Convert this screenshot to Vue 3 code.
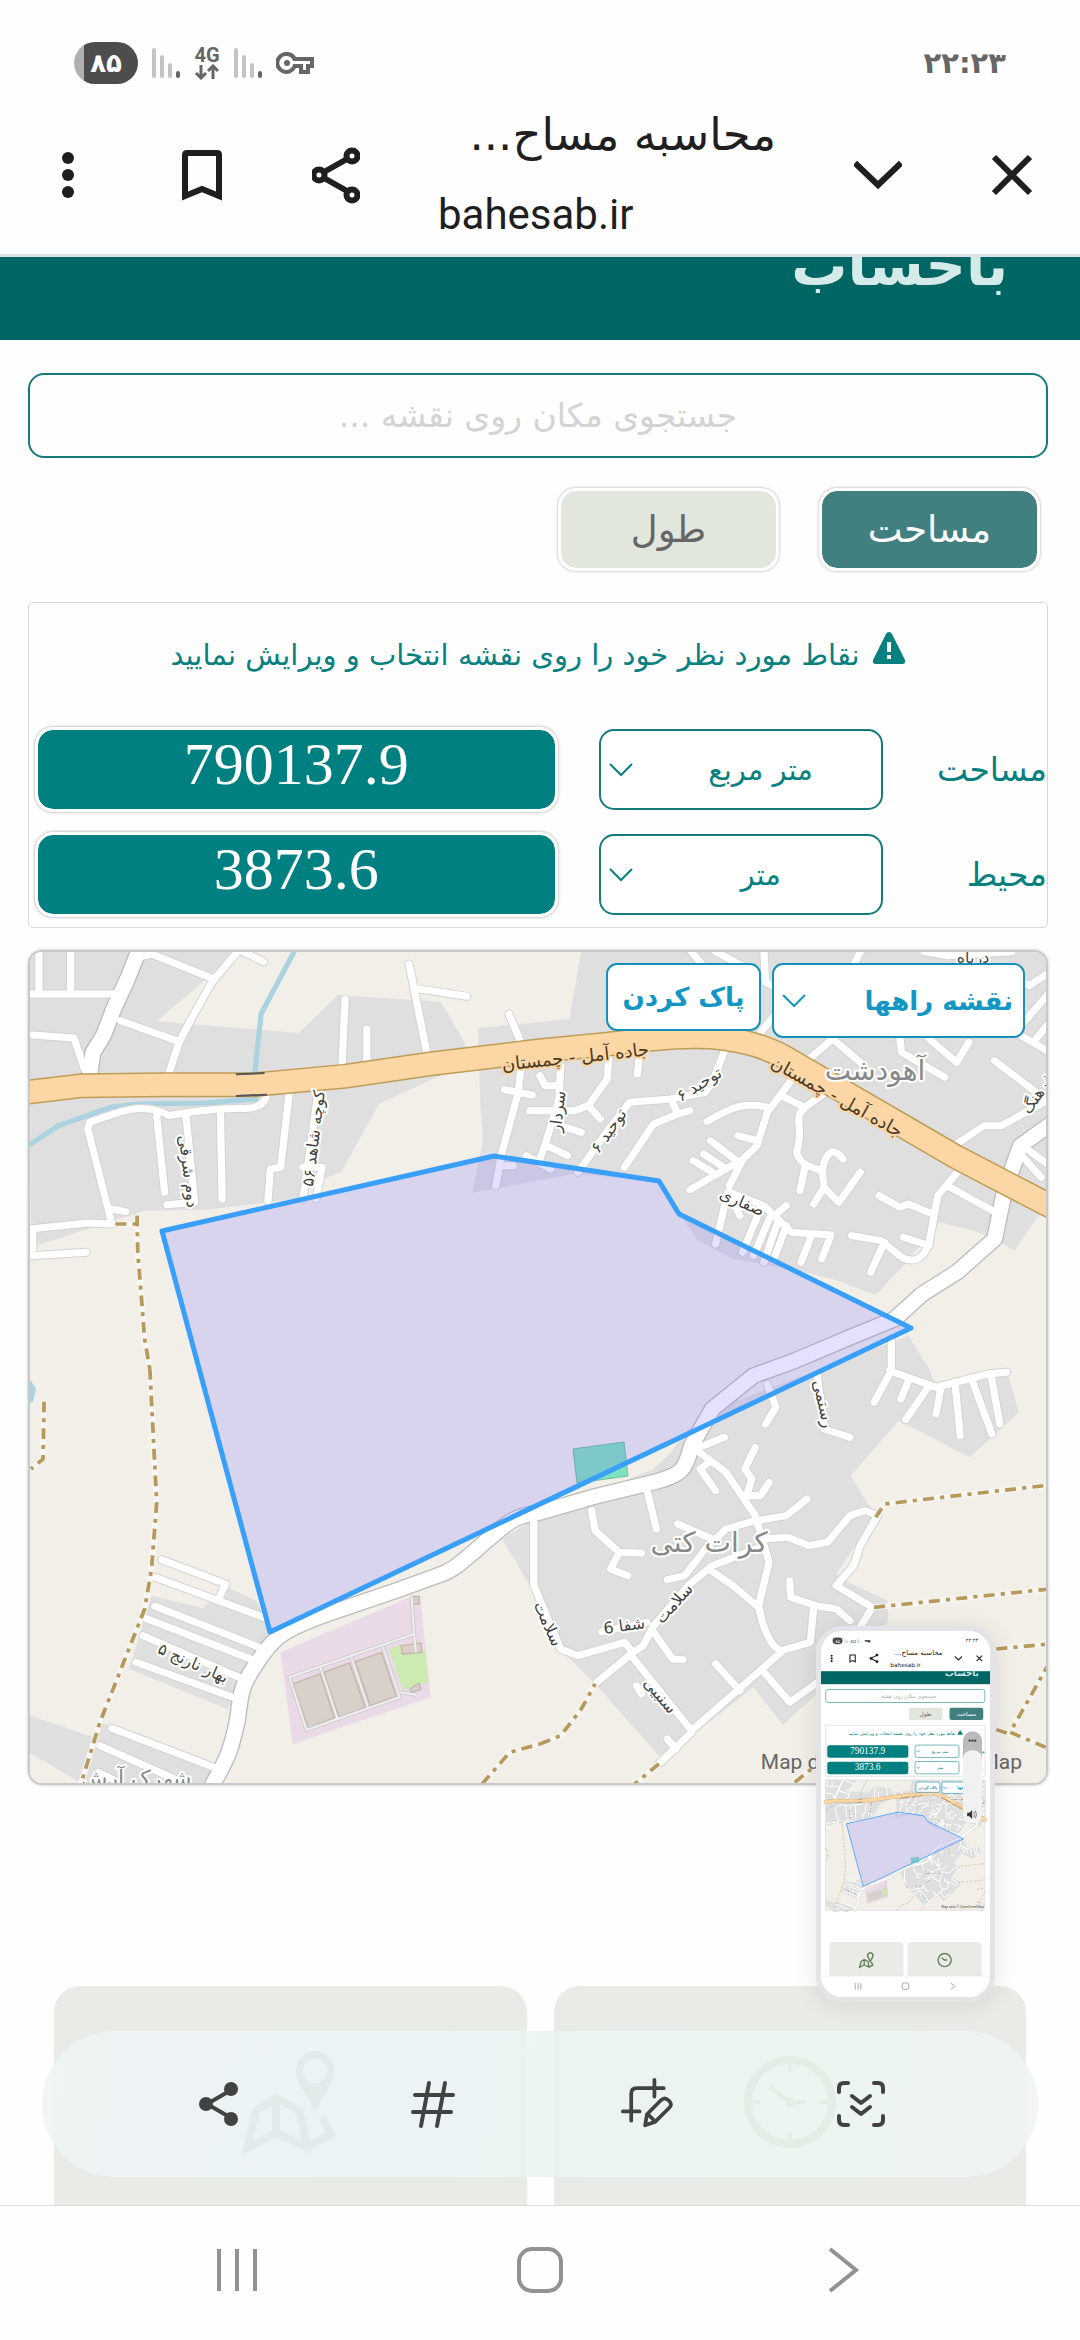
<script setup>
import { ref } from 'vue'

const search = ref('')
const mode = ref('area')
const areaUnit = ref('متر مربع')
const lengthUnit = ref('متر')
const mapType = ref('نقشه راهها')

const area = '790137.9'
const perimeter = '3873.6'

// The map is drawn in four tiles, each with its own local grid
const tiles = [
  {
    id: 'nw',
    at: 'translate(0 940) scale(.3444 .3333)',
    built: 'M85 38H690L455 247L868 282L980 168L1280 188L1360 330L1300 400L1100 495L990 700L940 720L860 780L600 812L420 815L330 845L90 925Z',
    wide: 'M405 30L370 120L330 210L300 290L270 340L260 410',
    streets: 'M85 165H330M113 30V160M205 30V165M400 55L440 45L615 118M690 38L615 130L550 250L520 310L488 410M350 245L520 308M95 288L215 297L245 390M705 38L765 68M1188 75L1240 345M1205 148L1355 172M1002 180L993 380M1065 270V370M1478 225L1512 310M1512 390L1505 460L1455 650L1440 740M1465 452L1545 468M775 465C770 500 740 510 700 508C600 510 540 520 490 530C450 505 400 500 330 525L260 550L255 570L325 855L255 852L85 870M325 810L365 818M95 870V950L250 940M455 530L478 760M540 530L565 790L485 797M640 520L645 780M840 460L815 685L785 690L778 785M925 450L880 780M880 685H935L918 780M1450 680H1490',
    water: 'M858 30L758 225L740 400L742 480L600 492L400 495L320 505L170 560L75 625',
    tracks: 'M335 855H398M398 830L400 940L420 1200L440 1320'
  },
  {
    id: 'ne',
    at: 'translate(540 940) scale(.3444 .3333)',
    built: 'M-180 268L85 240L120 38H1480V800L1440 840L1378 935L1330 905L1260 875L1160 850L1060 975L975 1068L850 1020L720 990L560 960L460 905L405 825L345 725L100 705L-196 762L-165 600L-173 500Z',
    wide: '',
    streets: 'M440 38L480 90M510 38L640 110M650 30L655 130L690 150M720 180L625 300M930 38L910 80M1115 38L1180 50L1370 38M1480 100L1420 140L1380 120M1480 160L1380 280L1480 340M1440 300L1480 250M1045 300L1050 340L1175 415M1130 300L1210 370L1245 310M770 370L850 300L930 370M1320 365L1440 460M740 410L660 520L630 620L590 660L550 740M485 548C560 500 600 490 660 505M700 470L770 505L830 460M770 505C730 540 770 560 745 640C760 690 800 680 820 700L825 745L868 790L930 700M770 680L755 755M825 745L795 795M820 690C830 640 850 620 880 660M575 590L630 605M495 605L565 660M475 645L540 690M445 665L500 700M435 752L590 660M545 760L510 915M580 830L550 760L650 800L730 880L845 888L818 960M640 810L588 940M670 830L620 950M690 850L650 970M715 860L680 960M790 885L758 970M680 830L715 800M1220 690L1155 770L1130 910C1110 970 1080 970 1050 955L990 905L905 890M1000 910L960 1000M985 770L1045 805L1070 795L1140 825M1055 895L1130 920M1190 745L1340 830M1210 615L1290 560L1340 560L1480 480M1390 640L1455 715M1400 620L1480 680M540 325L500 430L480 460L380 480L260 490L200 570L110 700M380 480L400 525L330 555L245 685M400 525L435 515M290 340L283 405M200 350L195 420L140 500L175 540M60 380L55 480L20 600L0 660M-30 515H100L140 500M0 410L15 440H50M60 560L120 580M20 620L80 650M-40 650L30 690',
    water: '',
    tracks: ''
  },
  {
    id: 'sw',
    at: 'translate(0 1370) scale(.3444 .3333)',
    built: 'M440 680L590 718L650 650L745 695L790 800L660 1020L375 900ZM85 1038L270 1105L290 1060L640 1190L600 1245H240L85 1150Z',
    wide: '',
    streets: 'M470 572L655 645L635 690M450 625L765 745M450 712L765 840M415 745L740 875M415 800L705 930M395 880L690 990M325 1078L620 1195M290 1130L540 1245M285 1210L345 1240',
    water: '',
    tracks: 'M435 0L450 300L455 400L440 600L420 720L340 930L290 1060L235 1245M128 98L125 270L90 300M1400 1245L1480 1150L1568 1125'
  },
  {
    id: 'se',
    at: 'translate(540 1370) scale(.3444 .3333)',
    built: 'M1070 -100L1130 0L1145 40L1355 0L1390 130L1248 265L1042 155L902 320L955 410L975 440L860 615L895 640L1010 695V760L820 960L705 1068L620 955L440 1100L345 1160L165 950L50 830L0 700L-110 510L0 440L330 300L380 250L430 180L560 100Z',
    wide: 'M1490 -740L1395 -670L1350 -540L1320 -390L1210 -290L1110 -225L1030 -150L900 -95L740 -25L620 20L500 120L440 230C420 310 410 315 330 340L150 385L0 430C-68 440 -88 455 -138 500C-218 570 -248 605 -298 620L-418 665L-618 735C-738 780 -768 800 -808 860C-868 950 -868 960 -878 1050C-898 1150 -908 1170 -958 1260',
    streets: 'M660 45L685 115L655 165M805 20L825 180L900 205M1020 -90V5L970 100M1015 5L1150 55L1300 15L1355 10M1070 35L1048 90M1130 50L1062 152M1165 50L1150 135M1205 40L1220 200M1255 35L1312 195M1310 20L1335 165M450 240L535 205M450 240L540 310L625 440L665 580L635 710C650 800 680 840 700 845L785 820L795 710M485 285L465 300L510 365M625 235L595 300L615 330L600 380L640 380L665 340M630 455L715 440L775 390M400 465L500 510M625 455L540 480L480 540L420 620L370 632M650 510L720 505L780 530L835 520L900 440L945 425L980 440L930 530L910 590L860 650L965 715L920 790M725 635L728 685L800 710L860 720L900 755M150 425L160 485L230 550L295 552M230 550L205 600L255 620M312 370L338 480M650 530L500 590L430 650L330 770L300 830L270 850M-18 450V650L60 840L110 860L245 820L270 850M490 600L560 650L635 715M330 790L385 870L415 872M180 788L310 760M270 850L165 940M265 860L440 1085L705 845M345 1185L440 1090M510 885L580 965M650 910L725 1000L820 930M280 950L295 975M370 1110L395 1140',
    water: '',
    tracks: 'M0 1125L60 1100L120 1020L160 945M975 445L1000 405L1480 348M970 715L1480 660M1325 840L1480 825M1480 880L1365 1090L1480 1140M1325 1082L1365 1095M345 1185L275 1245M740 1240L800 1190'
  }
]

const highway = 'M60 462L240 440L480 437L740 437L1000 412L1250 375L1568 335L1768 315C1960 290 2040 290 2100 298C2180 310 2220 325 2270 350L2778 655L3070 812'
const plot = '162,1232 494,1157 659,1182 679,1215 911,1329 270,1633'

const mapLabels = [
  { text: 'جاده آمل - چمستان', x: 576, y: 1064, turn: -6, kind: 'road' },
  { text: 'جاده آمل - چمستان', x: 834, y: 1103, turn: 29, kind: 'road' },
  { text: 'آهودشت', x: 875, y: 1081, turn: 0, kind: 'place' },
  { text: 'کرات کتی', x: 709, y: 1553, turn: 0, kind: 'place' },
  { text: 'شهرک آرش', x: 136, y: 1787, turn: 0, kind: 'place small' },
  { text: 'کوچه شاهد ۵۶', x: 319, y: 1140, turn: -83, kind: 'street' },
  { text: 'دوم شرقی', x: 183, y: 1173, turn: 83, kind: 'street' },
  { text: 'سردار', x: 563, y: 1113, turn: -83, kind: 'street' },
  { text: 'توحید ۶', x: 702, y: 1090, turn: -32, kind: 'street' },
  { text: 'توحید ۶', x: 613, y: 1135, turn: -55, kind: 'street' },
  { text: 'صفاری', x: 740, y: 1208, turn: 24, kind: 'street' },
  { text: 'رستمی', x: 818, y: 1406, turn: 78, kind: 'street' },
  { text: 'سلامت', x: 678, y: 1608, turn: -48, kind: 'street' },
  { text: 'شفا 6', x: 625, y: 1632, turn: -8, kind: 'street' },
  { text: 'سلامت', x: 543, y: 1627, turn: 66, kind: 'street' },
  { text: 'سنبیی', x: 656, y: 1700, turn: 50, kind: 'street' },
  { text: 'بهار نارنج ۵', x: 191, y: 1669, turn: 24, kind: 'street' },
  { text: 'فرهنگ', x: 1042, y: 1098, turn: -55, kind: 'street' },
  { text: 'درباه', x: 973, y: 964, turn: 0, kind: 'street' }
]
</script>

<template>
  <div class="screen">
    <div class="status">
      <div class="status-icons">
        <span class="battery">۸۵</span>
        <svg v-for="n in 2" :key="n" class="signal" :class="'sim' + n" viewBox="0 0 28 30">
          <path class="off" d="M2 2V28M10 9V28M18 17V28" />
          <path class="on" d="M26 25V28" />
        </svg>
        <span class="net">
          4G
          <svg viewBox="0 0 26 16"><path d="M7 1V14M2 9L7 14L12 9M19 15V2M14 7L19 2L24 7" /></svg>
        </span>
        <svg class="key" viewBox="0 0 38 22">
          <path fill-rule="evenodd" d="M11 0A11 11 0 0 1 20 5H38V16H34V22H23V16H20A11 11 0 1 1 11 0ZM11 4A7 7 0 1 0 17 13V12H27V18H30V12H34V9H17A7 7 0 0 0 11 4Z" />
          <circle cx="11" cy="11" r="3" />
        </svg>
      </div>
      <time>۲۲:۲۳</time>
    </div>

    <div class="toolbar">
      <button aria-label="Menu">
        <svg viewBox="0 0 48 60"><circle cx="24" cy="13" r="6" /><circle cx="24" cy="30" r="6" /><circle cx="24" cy="47" r="6" /></svg>
      </button>
      <button aria-label="Bookmark">
        <svg class="line" viewBox="0 0 48 60"><path d="M7 51V10Q7 8 9 8H39Q41 8 41 10V51L24 44Z" /></svg>
      </button>
      <button aria-label="Share">
        <svg class="line" viewBox="0 0 48 60"><path d="M12 27L35 14M12 33L35 46" /><circle cx="7" cy="30" r="5.500" /><circle cx="40" cy="11" r="5.500" /><circle cx="40" cy="50" r="5.500" /></svg>
      </button>
      <div class="titles">
        <p class="title" dir="rtl">محاسبه مساح...</p>
        <p class="url">bahesab.ir</p>
      </div>
      <button aria-label="Collapse">
        <svg class="line" viewBox="0 0 48 60"><path d="M1 18L24 40L47 18" /></svg>
      </button>
      <button aria-label="Close">
        <svg class="line" viewBox="0 0 48 60"><path d="M6 12L42 48M42 12L6 48" /></svg>
      </button>
    </div>

    <main class="page" dir="rtl">
      <header class="brand"><a href="#">باحساب</a></header>

      <div class="content">
        <input v-model="search" class="search" type="text" placeholder="جستجوی مکان روی نقشه ..." aria-label="جستجوی مکان روی نقشه" />

        <div class="modes">
          <button class="active" @click="mode = 'area'">مساحت</button>
          <button @click="mode = 'length'">طول</button>
        </div>

        <section class="panel">
          <p class="notice">
            <svg viewBox="0 0 34 32"><path fill-rule="evenodd" d="M17 0Q19 0 20 2L33 28Q34 32 30 32H4Q0 32 1 28L14 2Q15 0 17 0ZM15 10V20H19V10ZM15 23V27H19V23Z" /></svg>
            نقاط مورد نظر خود را روی نقشه انتخاب و ویرایش نمایید
          </p>
          <div class="row">
            <label for="area-unit">مساحت</label>
            <div class="pick">
              <select id="area-unit" v-model="areaUnit"><option>متر مربع</option><option>هکتار</option></select>
              <svg viewBox="0 0 24 14"><path d="M1 1L12 12L23 1" /></svg>
            </div>
            <output for="area-unit">{{ area }}</output>
          </div>
          <div class="row">
            <label for="length-unit">محیط</label>
            <div class="pick">
              <select id="length-unit" v-model="lengthUnit"><option>متر</option><option>کیلومتر</option></select>
              <svg viewBox="0 0 24 14"><path d="M1 1L12 12L23 1" /></svg>
            </div>
            <output for="length-unit">{{ perimeter }}</output>
          </div>
        </section>

        <section class="map">
          <svg class="map-view" viewBox="30 953 1016 831" preserveAspectRatio="xMidYMid slice">
            <g id="map-art">
              <rect class="land" x="30" y="953" width="1016" height="831" />
              <g v-for="t in tiles" :key="'b' + t.id" :transform="t.at">
                <path class="built" :d="t.built" />
                <path class="water" :d="t.water" />
              </g>
              <!-- sports ground, park and pond -->
              <g transform="translate(0 1370) scale(.3444 .3333)">
                <path class="pond" d="M85 28L105 60L95 100H85Z" />
                <path class="ground" d="M815 850L1200 680H1220L1250 985L850 1125Z" />
                <path class="lawn" d="M1130 840L1160 828L1235 845L1245 938L1170 962Z" />
                <path class="pitch" d="M850 945L930 915L970 1045L895 1078ZM940 910L1015 882L1060 1015L985 1045ZM1032 878L1108 850L1150 982L1075 1010ZM1165 830L1222 822L1225 850L1168 855ZM1195 682H1217V705H1200ZM1190 960L1217 943L1222 962L1195 970Z" />
                <path class="lane-edge" d="M1195 682L1202 795L840 925L890 1083L1160 985L1112 835M930 895L980 1050M1020 865L1070 1020M1202 795L1208 850M1160 970L1210 978" />
                <path class="lane" d="M1195 682L1202 795L840 925L890 1083L1160 985L1112 835M930 895L980 1050M1020 865L1070 1020M1202 795L1208 850M1160 970L1210 978" />
              </g>
              <path class="park" d="M573 1450L624 1443L628 1477L577 1484Z" />
              <g v-for="t in tiles" :key="'c' + t.id" :transform="t.at">
                <path class="street edge" :d="t.streets" />
                <path class="wide edge" :d="t.wide" />
              </g>
              <g v-for="t in tiles" :key="'s' + t.id" :transform="t.at">
                <path class="street" :d="t.streets" />
                <path class="wide" :d="t.wide" />
                <path class="track-edge" :d="t.tracks" />
                <path class="track" :d="t.tracks" />
              </g>
              <g transform="translate(0 940) scale(.3444 .3333)">
                <path class="highway edge" :d="highway" />
                <path class="highway" :d="highway" />
                <path class="bridge" d="M685 406L768 402M685 471L775 467" />
              </g>
              <text
                v-for="(l, i) in mapLabels"
                :key="i"
                class="map-label"
                :class="l.kind"
                :transform="`translate(${l.x} ${l.y}) rotate(${l.turn})`">{{ l.text }}</text>
              <polygon class="plot" :points="plot" />
            </g>
          </svg>
          <div class="map-tools">
            <div class="pick">
              <select v-model="mapType" aria-label="نوع نقشه"><option>نقشه راهها</option><option>ماهواره</option></select>
              <svg viewBox="0 0 24 14"><path d="M1 1L12 12L23 1" /></svg>
            </div>
            <button>پاک کردن</button>
          </div>
          <span class="credit" dir="ltr">Map data © OpenStreetMap</span>
        </section>

        <div class="cards" dir="ltr">
          <a href="#" class="card" aria-label="Map">
            <svg viewBox="0 0 96 102">
              <path class="stroke" d="M5 97L14 60L34 47L58 60L65 96L34 82ZM34 47V82M65 96L89 84L80 66" />
              <path fill-rule="evenodd" d="M73 0A19 19 0 0 1 92 20C92 34 80 44 73 62C66 44 54 34 54 20A19 19 0 0 1 73 0ZM73 8A12 12 0 1 0 73 32A12 12 0 1 0 73 8Z" />
            </svg>
          </a>
          <a href="#" class="card" aria-label="Clock">
            <svg viewBox="0 0 96 102">
              <circle class="stroke" cx="48" cy="51" r="42" />
              <path class="thin" d="M48 14V21M48 81V88M11 51H18M78 51H85M28 36L48 51H64" />
              <circle cx="48" cy="51" r="5" />
            </svg>
          </a>
        </div>
      </div>
    </main>

    <nav class="system">
      <button aria-label="Recents"><svg viewBox="0 0 60 60"><path d="M12 9V51M30 9V51M48 9V51" /></svg></button>
      <button aria-label="Home"><svg viewBox="0 0 60 60"><rect x="9" y="9" width="42" height="42" rx="13" /></svg></button>
      <button aria-label="Back"><svg viewBox="0 0 60 60"><path d="M17 9L43 30L17 51" /></svg></button>
    </nav>

    <!-- capture preview -->
    <div class="preview">
      <svg viewBox="0 0 1080 2340">
        <rect width="1080" height="2340" fill="#fff" />
        <rect x="74" y="42" width="64" height="42" rx="21" fill="#4d4d4d" />
        <text x="106" y="74" class="p-white" font-size="28">۸۵</text>
        <path d="M154 48V77M162 56V77M170 64V77M234 48V77M242 56V77M250 64V77" stroke="#bbb" stroke-width="4" />
        <text x="206" y="76" class="p-dark" font-size="26">4G</text>
        <path d="M280 63H312V74M302 63V72" class="p-line" />
        <text x="965" y="72" class="p-dark" font-size="32">۲۲:۲۳</text>
        <g fill="#222"><circle cx="68" cy="158" r="7" /><circle cx="68" cy="175" r="7" /><circle cx="68" cy="192" r="7" /></g>
        <path class="p-line" d="M185 153H219V197L202 189L185 197ZM360 154L318 175L360 196M855 163L878 185L901 163M994 157L1030 193M1030 157L994 193" />
        <g fill="#222"><circle cx="358" cy="154" r="9" /><circle cx="320" cy="175" r="9" /><circle cx="358" cy="196" r="9" /></g>
        <text x="624" y="152" class="p-dark p-rtl" font-size="45">محاسبه مساح...</text>
        <text x="540" y="232" class="p-dark" font-size="37">bahesab.ir</text>
        <rect y="257" width="1080" height="83" fill="#006664" />
        <svg x="0" y="257" width="1080" height="83"><text x="900" y="28" class="p-logo" font-size="56">باحساب</text></svg>
        <rect x="30" y="374" width="1017" height="83" rx="14" class="p-box" />
        <text x="540" y="427" class="p-rtl" fill="#aaa" font-size="33">جستجوی مکان روی نقشه ...</text>
        <rect x="821" y="491" width="216" height="77" rx="14" fill="#428080" />
        <text x="929" y="541" class="p-white" font-size="37">مساحت</text>
        <rect x="561" y="491" width="216" height="77" rx="14" fill="#e1e7dd" />
        <text x="667" y="541" fill="#666" font-size="37">طول</text>
        <rect x="31" y="602" width="1017" height="326" class="p-panel" />
        <path d="M889 632L908 663H870Z" fill="#078080" />
        <text x="517" y="663" fill="#078080" font-size="29">نقاط مورد نظر خود را روی نقشه انتخاب و ویرایش نمایید</text>
        <g v-for="(v, i) in [area, perimeter]" :key="v" :transform="`translate(0 ${i * 105})`">
          <rect x="40" y="730" width="518" height="80" rx="14" fill="#008080" />
          <text x="298" y="783" class="p-number">{{ v }}</text>
          <rect x="601" y="729" width="281" height="79" rx="14" class="p-box" />
          <path class="p-box" d="M612 763L622 774L632 763" />
          <text x="760" y="780" fill="#078080" font-size="29">{{ i ? lengthUnit : areaUnit }}</text>
          <text x="992" y="780" fill="#078080" font-size="33">{{ i ? 'محیط' : 'مساحت' }}</text>
        </g>
        <use href="#map-art" />
        <rect x="29" y="952" width="1018" height="833" rx="12" class="p-panel" />
        <rect x="607" y="965" width="153" height="66" rx="10" class="p-blue" />
        <text x="683" y="1010" class="p-blue-text">پاک کردن</text>
        <rect x="773" y="965" width="251" height="73" rx="10" class="p-blue" />
        <text x="945" y="1010" class="p-blue-text">نقشه راهها</text>
        <path class="p-box" d="M783 996L794 1007L805 996" />
        <text x="905" y="1769" class="p-credit">Map data © OpenStreetMap</text>
        <path d="M54 2205V2011Q54 1987 78 1987H503Q527 1987 527 2011V2205ZM554 2205V2011Q554 1987 578 1987H1002Q1026 1987 1026 2011V2205Z" fill="#e9ece6" />
        <g class="p-card" transform="translate(242 2052)"><path d="M5 97L14 60L34 47L58 60L65 96L34 82ZM34 47V82M65 96L89 84L80 66M73 62L59 32A17 17 0 1 1 87 32Z" /></g>
        <g class="p-card"><circle cx="790" cy="2103" r="42" /><path d="M770 2088L790 2103H806" /></g>
        <path d="M0 2205H1080" stroke="#ddd" stroke-width="3" />
        <path class="p-nav" d="M219 2250V2292M237 2250V2292M255 2250V2292M829 2249L855 2270L829 2291" />
        <rect class="p-nav" x="519" y="2249" width="42" height="42" rx="13" />
        <!-- volume slider -->
        <rect x="907" y="640" width="122" height="590" rx="61" fill="#bbb" />
        <path d="M907 825Q907 762 968 762Q1029 762 1029 825V1170Q1029 1230 968 1230Q907 1230 907 1170Z" fill="#f1f1f1" />
        <g fill="#333"><circle cx="950" cy="701" r="7" /><circle cx="968" cy="701" r="7" /><circle cx="986" cy="701" r="7" /><path d="M934 1162H948L966 1144V1202L948 1184H934Z" /></g>
        <path d="M976 1156Q988 1173 976 1190M986 1148Q1002 1173 986 1198" fill="none" stroke="#777" stroke-width="6" />
      </svg>
    </div>

    <div class="capture-bar">
      <button aria-label="Share">
        <svg viewBox="0 0 52 52"><path d="M40 11L14 26L40 41" /><g class="solid"><circle cx="13" cy="26" r="5" /><circle cx="38" cy="11" r="5" /><circle cx="38" cy="41" r="5" /></g></svg>
      </button>
      <button aria-label="Tags">
        <svg viewBox="0 0 52 52"><path d="M22 5L14 48M38 5L30 48M8 17H46M6 34H44" /></svg>
      </button>
      <button aria-label="Crop and edit">
        <svg viewBox="2 0 56 56"><path d="M4 36H22M13 46V17Q13 11 19 11H48M38 2V20M28 51L30 39L45 24Q49 20 53 24Q58 28 54 32L39 47ZM31 39L38 46" /></svg>
      </button>
      <button aria-label="Scroll capture">
        <svg viewBox="0 0 52 52"><path d="M4 14V10Q4 5 9 5H13M39 5H43Q48 5 48 10V14M4 38V42Q4 47 9 47H13M39 47H43Q48 47 48 42V38M17 18L26 25L35 18M17 29L26 36L35 29" /></svg>
      </button>
    </div>
  </div>
</template>

<style>
body {
  margin: 0;
  background: #fefefe;
}
</style>

<style scoped>
.screen {
  position: relative;
  display: flex;
  flex-direction: column;
  min-height: 100vh;
  overflow: hidden;
  background: #fefefe;
  font-family: "DejaVu Sans", "Noto Sans", sans-serif;
}

button,
select,
input {
  margin: 0;
  padding: 0;
  border: 0;
  background: none;
  font-family: inherit;
  color: inherit;
}

p {
  margin: 0;
}

/* status bar */
.status {
  display: flex;
  justify-content: space-between;
  align-items: center;
  height: 66px;
  padding: 30px 74px 0;
  color: #666;
}

.status-icons {
  display: flex;
  align-items: center;
  gap: 14px;
}

.battery {
  width: 64px;
  height: 42px;
  border-radius: 21px;
  background: linear-gradient(90deg, #b0b0b0 10px, #4d4d4d 10px);
  color: #fff;
  font-size: 26px;
  font-weight: bold;
  line-height: 42px;
  text-align: center;
}

.signal {
  width: 28px;
  height: 30px;
  fill: none;
  stroke-width: 4;
  stroke-linecap: round;
}

.sim2 {
  order: 1;
}

.key {
  order: 2;
  width: 38px;
  height: 22px;
  fill: #666;
}

.off {
  stroke: #c4c4c4;
}

.on {
  stroke: #666;
}

.net {
  display: flex;
  flex-direction: column;
  align-items: center;
  font: bold 20px/18px Roboto, sans-serif;
}

.net svg {
  width: 26px;
  height: 16px;
  fill: none;
  stroke: #666;
  stroke-width: 3;
}

time {
  font-size: 29px;
  font-weight: bold;
}

/* browser toolbar */
.toolbar {
  display: flex;
  align-items: center;
  gap: 86px;
  height: 158px;
  padding: 0 44px;
  border-bottom: 3px solid #d9e4ea;
  color: #1f1f1f;
}

.toolbar svg {
  display: block;
  width: 48px;
  height: 60px;
  fill: #1f1f1f;
}

.toolbar svg.line {
  fill: none;
  stroke: #1f1f1f;
  stroke-width: 6;
}

.titles {
  flex: 1;
  min-width: 0;
  margin: 0 -8px;
  white-space: nowrap;
}

.title {
  font-size: 45px;
  line-height: 80px;
}

.url {
  font: 42px/80px Roboto, sans-serif;
}

/* page */
.page {
  flex: 1;
  display: flex;
  flex-direction: column;
}

.brand {
  display: flex;
  align-items: flex-end;
  height: 83px;
  padding: 0 72px;
  overflow: hidden;
  background: #006664;
}

.brand a {
  color: #d5ebea;
  font-size: 56px;
  font-weight: bold;
  line-height: 148px;
  text-decoration: none;
}

.content {
  flex: 1;
  display: flex;
  flex-direction: column;
  padding: 33px 32px 0 28px;
}

.search {
  height: 85px;
  box-sizing: border-box;
  border: 2px solid #157b7b;
  border-radius: 16px;
  font-size: 33px;
  text-align: center;
}

.search::placeholder {
  color: #d3d3d3;
  opacity: 1;
}

.modes {
  display: flex;
  gap: 40px;
  margin: 30px 8px 0;
}

.modes button {
  width: 221px;
  height: 83px;
  border: 3px solid #fff;
  border-radius: 18px;
  background: #e1e7dd padding-box;
  box-shadow: 0 0 3px #aaa;
  color: #666;
  font-size: 37px;
}

.modes .active {
  background-color: #428080;
  color: #fff;
}

.panel {
  display: flex;
  flex-direction: column;
  gap: 20px;
  margin-top: 31px;
  padding-bottom: 10px;
  border: 1px solid #d8d8d0;
  border-radius: 5px;
  color: #078080;
}

.notice {
  display: flex;
  justify-content: center;
  gap: 12px;
  height: 104px;
  font-size: 29px;
  line-height: 104px;
  white-space: nowrap;
}

.notice svg {
  width: 34px;
  height: 32px;
  margin-top: 29px;
  fill: #078080;
}

.row {
  display: grid;
  grid-template-columns: 164fr 283fr 562fr;
  align-items: center;
  height: 85px;
  padding-left: 6px;
  font-size: 33px;
}

.pick {
  display: grid;
}

.pick select,
.pick svg {
  grid-area: 1 / 1;
}

.pick select {
  appearance: none;
  width: 100%;
  height: 81px;
  box-sizing: border-box;
  padding-left: 40px;
  border: 2px solid #157b7b;
  border-radius: 15px;
  background: #fff;
  font-size: 29px;
  text-align: center;
  text-align-last: center;
}

.pick svg {
  justify-self: end;
  align-self: center;
  width: 24px;
  height: 14px;
  margin-left: 10px;
  fill: none;
  stroke: currentColor;
  stroke-width: 2;
  pointer-events: none;
}

output {
  height: 79px;
  margin-right: 41px;
  border: 3px solid #fff;
  border-radius: 18px;
  background: #008080 padding-box;
  box-shadow: 0 0 3px #999;
  color: #fff;
  font: 60px/68px "Liberation Serif", serif;
  text-align: center;
}

/* map */
.map {
  position: relative;
  margin-top: 22px;
  border: 2px solid #c8c8c8;
  border-radius: 14px;
  overflow: hidden;
  box-shadow: 0 0 3px #bbb;
}

.map-view {
  display: block;
  width: 100%;
  aspect-ratio: 1016 / 831;
}

.land { fill: #f2efe9; }
.built { fill: #dfdfdf; }
.pond { fill: #aad3df; }
.ground { fill: #ead9e7; }
.lawn { fill: #cdebb0; }

.pitch {
  fill: #d9d0c9;
  stroke: #c6b5ab;
  stroke-width: 4;
}

.park {
  fill: #7fe2bd;
  stroke: #6cbfa0;
}

.water,
.lane,
.lane-edge,
.street,
.wide,
.track,
.track-edge,
.highway,
.bridge {
  fill: none;
  stroke: #fff;
  stroke-linejoin: round;
}

.water {
  stroke: #aad3df;
  stroke-width: 15;
}

.lane { stroke: #efefef; stroke-width: 6; }
.lane-edge { stroke: #c9c9c9; stroke-width: 11; }
.street { stroke-width: 21; stroke-linecap: round; }
.street.edge { stroke: #d3d3d3; stroke-width: 27; }
.wide { stroke-width: 43; }
.wide.edge { stroke: #bdbdbd; stroke-width: 51; }

.track {
  stroke: #b59a5b;
  stroke-width: 11;
  stroke-dasharray: 32 18 12 18;
}

.track-edge {
  stroke: #f8f6f2;
  stroke-width: 17;
}

.highway { stroke: #fcd6a4; stroke-width: 66; }
.highway.edge { stroke: #bf9d57; stroke-width: 75; }
.bridge { stroke: #555; stroke-width: 6; }

.map-label {
  fill: #444;
  stroke: #fff;
  stroke-width: 4;
  stroke-linejoin: round;
  paint-order: stroke;
  font-size: 16px;
  text-anchor: middle;
}

.map-label.road {
  fill: #4b3a25;
  stroke: #fcd6a4;
  font-size: 18px;
}

.map-label.place {
  fill: #888;
  font-size: 28px;
}

.map-label.place.small {
  font-size: 22px;
}

.plot {
  fill: rgba(120, 105, 255, 0.2);
  stroke: #389ffb;
  stroke-width: 5;
  stroke-linejoin: round;
}

.map-tools {
  position: absolute;
  top: 11px;
  right: 21px;
  display: flex;
  align-items: flex-start;
  gap: 11px;
  color: #1296c4;
}

.map-tools .pick {
  width: 253px;
}

.map-tools select,
.map-tools button {
  border: 2px solid #1590b8;
  border-radius: 11px;
  background: #fff;
  font-size: 26px;
  font-weight: bold;
}

.map-tools select {
  height: 75px;
  padding-right: 10px;
  text-align: right;
  text-align-last: right;
}

.map-tools button {
  width: 155px;
  height: 68px;
  white-space: nowrap;
}

.credit {
  position: absolute;
  right: 24px;
  bottom: 7px;
  color: #666;
  font: 21px/28px Roboto, sans-serif;
}

/* cards */
.cards {
  flex: 1;
  display: grid;
  grid-template-columns: 1fr 1fr;
  gap: 27px;
  min-height: 218px;
  margin: 201px 22px 0 26px;
}

.card {
  padding-top: 65px;
  border-radius: 26px 26px 0 0;
  background: #e9ece6;
  text-align: center;
}

.card svg {
  width: 96px;
  height: 102px;
  fill: #66805f;
}

.card .stroke,
.card .thin {
  fill: none;
  stroke: #66805f;
  stroke-width: 8;
}

.card .thin {
  stroke-width: 4;
}

/* system navigation */
.system {
  display: flex;
  justify-content: center;
  align-items: center;
  gap: 243px;
  height: 128px;
  padding-bottom: 6px;
  border-top: 1px solid #dcdcdc;
  background: #fefefe;
}

.system svg {
  display: block;
  width: 60px;
  height: 60px;
  fill: none;
  stroke: #929292;
  stroke-width: 4;
}

/* capture preview and its bar */
.preview {
  position: absolute;
  right: 85px;
  bottom: 338px;
  width: 169px;
  border: 5px solid #e3e3e8;
  border-radius: 26px;
  overflow: hidden;
  box-shadow: 0 2px 24px rgba(0, 0, 0, 0.1);
}

.preview > svg {
  display: block;
  width: 100%;
}

.preview text {
  text-anchor: middle;
}

.p-white { fill: #fff; }
.p-dark { fill: #222; }
.p-rtl { direction: rtl; }
.p-logo { fill: #d5ebea; font-weight: bold; }

.p-line {
  fill: none;
  stroke: #222;
  stroke-width: 7;
}

.p-box {
  fill: none;
  stroke: #2a8c94;
  stroke-width: 4;
}

.p-panel {
  fill: none;
  stroke: #ddd;
  stroke-width: 5;
}

.p-number {
  fill: #fff;
  font: 60px "Liberation Serif", serif;
}

.p-blue {
  fill: #fff;
  stroke: #1590b8;
  stroke-width: 4;
}

.p-blue-text {
  fill: #1296c4;
  font-size: 26px;
  font-weight: bold;
}

.p-credit {
  fill: #555;
  font: 22px Roboto, sans-serif;
}

.p-card {
  fill: none;
  stroke: #66805f;
  stroke-width: 9;
}

.p-nav {
  fill: none;
  stroke: #929292;
  stroke-width: 5;
}

.capture-bar {
  position: absolute;
  right: 42px;
  bottom: 163px;
  left: 42px;
  display: flex;
  justify-content: center;
  align-items: center;
  gap: 162px;
  height: 146px;
  border-radius: 73px;
  background: linear-gradient(100deg, rgba(239, 244, 245, 0.93), rgba(235, 243, 245, 0.93) 40%, rgba(236, 246, 239, 0.93) 75%, rgba(240, 244, 243, 0.93));
}

.capture-bar svg {
  display: block;
  width: 52px;
  height: 52px;
  fill: none;
  stroke: #424242;
  stroke-width: 4;
  stroke-linecap: round;
  stroke-linejoin: round;
}

.capture-bar .solid {
  fill: #424242;
}
</style>
